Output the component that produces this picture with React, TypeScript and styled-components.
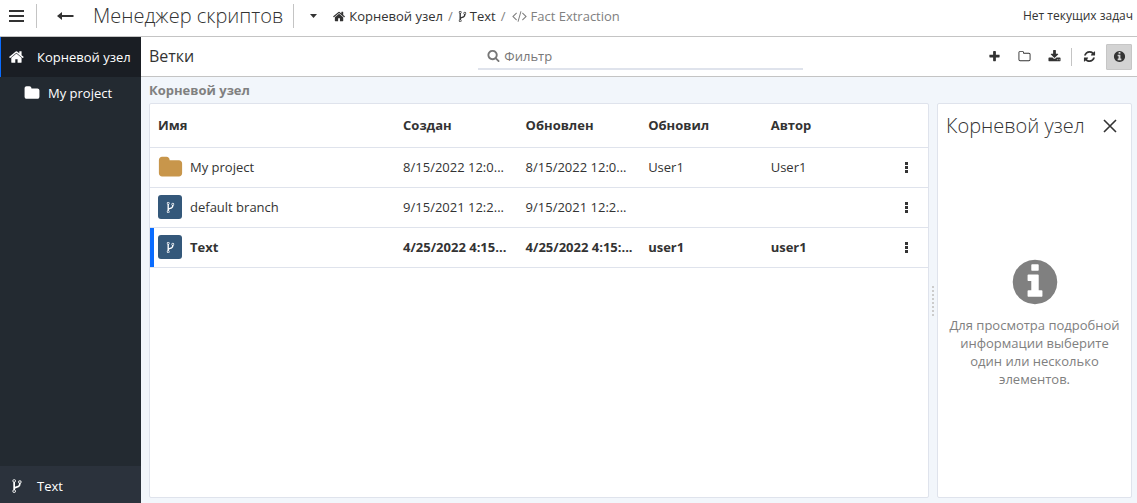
import React from 'react';
import styled, { createGlobalStyle, css } from 'styled-components';

const GlobalStyle = createGlobalStyle`
  *, *::before, *::after { box-sizing: border-box; }
  body {
    margin: 0;
    font-family: 'Open Sans', 'Noto Sans', sans-serif;
    font-size: 13px;
    line-height: 18px;
    color: #333;
    background: #f2f6fb;
  }
  button, input { font: inherit; color: inherit; }
  a { color: inherit; text-decoration: none; }
`;

const glyphs = {
  home: 'M1408 992v480q0 26-19 45t-45 19h-384v-384h-256v384h-384q-26 0-45-19t-19-45v-480q0-1 .5-3t.5-3l575-474 575 474q1 2 1 6zm223-69l-62 74q-8 9-21 11h-3q-13 0-21-7l-692-577-692 577q-12 8-24 7-13-2-21-11l-62-74q-8-10-7-23.5t11-21.5l719-599q32-26 76-26t76 26l244 204v-195q0-14 9-23t23-9h192q14 0 23 9t9 23v408l219 182q10 8 11 21.5t-7 23.5z',
  fork: 'M672 1472q0-40-28-68t-68-28-68 28-28 68 28 68 68 28 68-28 28-68zm0-1152q0-40-28-68t-68-28-68 28-28 68 28 68 68 28 68-28 28-68zm640 128q0-40-28-68t-68-28-68 28-28 68 28 68 68 28 68-28 28-68zm96 0q0 52-26 96.5t-70 69.5q-2 287-226 414-67 38-203 81-128 40-169.5 71t-41.5 100v26q44 25 70 69.5t26 96.5q0 80-56 136t-136 56-136-56-56-136q0-52 26-96.5t70-69.5v-820q-44-25-70-69.5t-26-96.5q0-80 56-136t136-56 136 56 56 136q0 52-26 96.5t-70 69.5v497q54-26 154-57 55-17 87.5-29.5t70.5-31 59-39.5 40.5-51 28-69.5 8.5-91.5q-44-25-70-69.5t-26-96.5q0-80 56-136t136-56 136 56 56 136z',
  info: 'M1152 1376v-160q0-14-9-23t-23-9h-96v-512q0-14-9-23t-23-9h-320q-14 0-23 9t-9 23v160q0 14 9 23t23 9h96v320h-96q-14 0-23 9t-9 23v160q0 14 9 23t23 9h448q14 0 23-9t9-23zm-128-896v-160q0-14-9-23t-23-9h-192q-14 0-23 9t-9 23v160q0 14 9 23t23 9h192q14 0 23-9t9-23zm640 416q0 209-103 385.5t-279.5 279.5-385.5 103-385.5-103-279.5-279.5-103-385.5 103-385.5 279.5-279.5 385.5-103 385.5 103 279.5 279.5 103 385.5z',
  search: 'M1216 832q0-185-131.5-316.5t-316.5-131.5-316.5 131.5-131.5 316.5 131.5 316.5 316.5 131.5 316.5-131.5 131.5-316.5zm512 832q0 52-38 90t-90 38q-54 0-90-38l-343-342q-179 124-399 124-143 0-273.5-55.5t-225-150-150-225-55.5-273.5 55.5-273.5 150-225 225-150 273.5-55.5 273.5 55.5 225 150 150 225 55.5 273.5q0 220-124 399l343 343q37 37 37 90z',
  code: 'M617 1399l-50 50q-10 10-23 10t-23-10l-466-466q-10-10-10-23t10-23l466-466q10-10 23-10t23 10l50 50q10 10 10 23t-10 23l-393 393 393 393q10 10 10 23t-10 23zm591-1067l-373 1291q-4 13-15.5 19.5t-23.5 2.5l-62-17q-13-4-19.5-15.5t-2.5-24.5l373-1291q4-13 15.5-19.5t23.5-2.5l62 17q13 4 19.5 15.5t2.5 24.5zm657 651l-466 466q-10 10-23 10t-23-10l-50-50q-10-10-10-23t10-23l393-393-393-393q-10-10-10-23t10-23l50-50q10-10 23-10t23 10l466 466q10 10 10 23t-10 23z',
  download: 'M1344 1344q0-26-19-45t-45-19-45 19-19 45 19 45 45 19 45-19 19-45zm256 0q0-26-19-45t-45-19-45 19-19 45 19 45 45 19 45-19 19-45zm128-224v320q0 40-28 68t-68 28h-1472q-40 0-68-28t-28-68v-320q0-40 28-68t68-28h465l135 136q58 56 136 56t136-56l136-136h464q40 0 68 28t28 68zm-325-569q17 41-14 70l-448 448q-18 19-45 19t-45-19l-448-448q-31-29-14-70 17-39 59-39h256v-448q0-26 19-45t45-19h256q26 0 45 19t19 45v448h256q42 0 59 39z',
  refresh: 'M1639 1056q0 5-1 7-64 268-268 434.5t-478 166.5q-146 0-282.5-55t-243.5-157l-129 129q-19 19-45 19t-45-19-19-45v-448q0-26 19-45t45-19h448q26 0 45 19t19 45-19 45l-137 137q71 66 161 102t187 36q134 0 250-65t186-179q11-17 53-117 8-23 30-23h192q13 0 22.5 9.5t9.5 22.5zm25-800v448q0 26-19 45t-45 19h-448q-26 0-45-19t-19-45 19-45l138-138q-148-137-349-137-134 0-250 65t-186 179q-11 17-53 117-8 23-30 23h-199q-13 0-22.5-9.5t-9.5-22.5v-7q65-268 270-434.5t480-166.5q146 0 284 55.5t245 156.5l130-129q19-19 45-19t45 19 19 45z',
  folder: 'M1728 608v704q0 92-66 158t-158 66h-1216q-92 0-158-66t-66-158v-960q0-92 66-158t158-66h320q92 0 158 66t66 158v32h672q92 0 158 66t66 158z',
  folderOpen: 'M1600 1312v-704q0-40-28-68t-68-28h-704q-40 0-68-28t-28-68v-64q0-40-28-68t-68-28h-320q-40 0-68 28t-28 68v960q0 40 28 68t68 28h1216q40 0 68-28t28-68zm128-704v704q0 92-66 158t-158 66h-1216q-92 0-158-66t-66-158v-960q0-92 66-158t158-66h320q92 0 158 66t66 158v32h672q92 0 158 66t66 158z',
  plus: 'M1600 736v192q0 40-28 68t-68 28h-416v416q0 40-28 68t-68 28h-192q-40 0-68-28t-28-68v-416h-416q-40 0-68-28t-28-68v-192q0-40 28-68t68-28h416v-416q0-40 28-68t68-28h192q40 0 68 28t28 68v416h416q40 0 68 28t28 68z',
};

const Svg = styled.svg`
  display: block;
  flex: none;
  fill: currentColor;
`;

function Icon({ name, size = 14 }: { name: keyof typeof glyphs; size?: number }) {
  const wide = name === 'code';
  return (
    <Svg
      width={wide ? size + 3 : size}
      height={size}
      viewBox={`0 0 ${wide ? 1920 : 1792} 1792`}
      aria-hidden="true"
    >
      <path d={glyphs[name]} />
    </Svg>
  );
}

const Page = styled.div`
  display: flex;
  flex-direction: column;
  min-height: 100vh;
`;

const Header = styled.header`
  display: flex;
  align-items: center;
  height: 37px;
  padding: 0 4px 4px 0;
  background: #fff;
  border-bottom: 1px solid #c4c4c4;
`;

const GhostButton = styled.button<{ $width: number }>`
  display: flex;
  align-items: center;
  justify-content: center;
  flex: none;
  width: ${(p) => p.$width}px;
  height: 26px;
  padding: 0;
  border: 0;
  background: transparent;
`;

const MenuButton = styled(GhostButton)`
  justify-content: flex-start;
  padding-left: 9px;
`;

const Divider = styled.span<{ $height: number }>`
  flex: none;
  width: 1px;
  height: ${(p) => p.$height}px;
  background: #c4c4c4;
`;

const Title = styled.h1`
  margin: 0 10px 0 0;
  font-size: 20px;
  line-height: 26px;
  font-weight: 300;
  white-space: nowrap;
`;

const Crumbs = styled.nav`
  display: flex;
  flex: 1;
  align-items: center;
  gap: 5px;
  white-space: nowrap;
`;

const Crumb = styled.a<{ $muted?: boolean }>`
  display: flex;
  align-items: center;
  gap: 3px;
  color: ${(p) => (p.$muted ? '#808080' : '#333')};
`;

const Slash = styled.span`
  color: #808080;
`;

const Tasks = styled.span`
  font-size: 12px;
  white-space: nowrap;
`;

const Body = styled.div`
  display: flex;
  flex: 1;
`;

const Sidebar = styled.nav`
  display: flex;
  flex-direction: column;
  flex: none;
  width: 141px;
  background: #232a31;
  color: #fff;
`;

const SideLink = styled.a<{ $kind: 'root' | 'child' | 'footer' }>`
  display: flex;
  align-items: center;
  gap: 12px;
  height: 40px;
  padding-left: 9px;
  white-space: nowrap;
  ${(p) =>
    p.$kind === 'root' &&
    css`
      padding-left: 8px;
      background: #1a1e24;
      border-left: 1px solid #0a6cff;
    `}
  ${(p) =>
    p.$kind === 'child' &&
    css`
      gap: 8px;
      height: 32px;
      padding-left: 24px;
    `}
  ${(p) =>
    p.$kind === 'footer' &&
    css`
      height: 37px;
      margin-top: auto;
      padding-top: 2px;
      background: #2b323c;
    `}
`;

const Content = styled.div`
  display: flex;
  flex: 1;
  flex-direction: column;
  min-width: 0;
`;

const Toolbar = styled.div`
  display: grid;
  grid-template-columns: 1fr 33% 1fr;
  align-items: center;
  height: 40px;
  padding: 0 5px 0 8px;
  background: #fff;
  border-bottom: 1px solid #c4c4c4;
`;

const ToolbarTitle = styled.h2`
  margin: 0;
  padding-bottom: 2px;
  font-size: 16px;
  line-height: 22px;
  font-weight: 400;
`;

const Filter = styled.label`
  display: flex;
  align-items: center;
  gap: 4px;
  height: 27px;
  padding-left: 9px;
  border-bottom: 2px solid #dfe3ec;
  color: #777;
`;

const FilterInput = styled.input`
  flex: 1;
  min-width: 0;
  height: 22px;
  padding: 0;
  border: 0;
  outline: 0;
  background: transparent;
  &::placeholder { color: #777; opacity: 1; }
`;

const Actions = styled.div`
  display: flex;
  align-items: center;
  justify-content: flex-end;
  gap: 4px;
`;

const ActionButton = styled.button<{ $active?: boolean }>`
  display: flex;
  align-items: center;
  justify-content: center;
  width: 26px;
  height: 26px;
  padding: 0;
  border: ${(p) => (p.$active ? '1px solid #c6c6c6' : '0')};
  border-radius: 1px;
  background: ${(p) => (p.$active ? '#d3d3d3' : 'transparent')};
`;

const Workspace = styled.main`
  display: flex;
  flex: 1;
  flex-direction: column;
  padding: 4px 5px 5px 8px;
`;

const Path = styled.div`
  height: 22px;
  font-weight: 700;
  color: #808080;
`;

const Columns = styled.div`
  display: flex;
  flex: 1;
`;

const Panel = styled.section`
  background: #fff;
  border: 1px solid #dfe3ec;
  border-radius: 2px;
`;

const ListPanel = styled(Panel)`
  flex: 1;
  min-width: 0;
`;

const Splitter = styled.div`
  display: flex;
  flex: none;
  flex-direction: column;
  align-items: center;
  justify-content: center;
  gap: 2px;
  width: 8px;
`;

const Dot = styled.span`
  width: 2px;
  height: 2px;
  background: #ccc;
`;

const InfoPanel = styled(Panel)`
  display: flex;
  flex: none;
  flex-direction: column;
  width: 195px;
`;

const InfoHeader = styled.div`
  display: flex;
  align-items: center;
  justify-content: space-between;
  height: 44px;
  padding: 0 8px;
`;

const InfoTitle = styled.h2`
  margin: 0;
  font-size: 20px;
  line-height: 26px;
  font-weight: 300;
  white-space: nowrap;
`;

const Empty = styled.div`
  display: flex;
  flex: 1;
  flex-direction: column;
  align-items: center;
  justify-content: center;
  gap: 8px;
  padding: 0 8px 2px;
  color: #808080;
  text-align: center;
`;

const Hint = styled.p`
  margin: 0;
`;

const Table = styled.table`
  width: 100%;
  table-layout: fixed;
  border-collapse: separate;
  border-spacing: 0;
`;

const Col = styled.col<{ $width?: string }>`
  width: ${(p) => p.$width ?? 'auto'};
`;

const Th = styled.th`
  height: 44px;
  padding: 0 8px 2px;
  border-bottom: 1px solid #dfe3ec;
  font-weight: 700;
  text-align: left;
`;

const Row = styled.tr<{ $current?: boolean }>`
  font-weight: ${(p) => (p.$current ? 700 : 400)};
  td:first-child {
    box-shadow: ${(p) => (p.$current ? 'inset 4px 0 #0a6cff' : 'none')};
  }
`;

const Td = styled.td`
  height: 40px;
  padding: 0 8px 1px;
  border-bottom: 1px solid #dfe3ec;
  white-space: nowrap;
`;

const NameCell = styled.div`
  display: flex;
  align-items: center;
  gap: 8px;
`;

const Badge = styled.span<{ $folder: boolean }>`
  display: flex;
  align-items: center;
  justify-content: center;
  flex: none;
  width: 24px;
  height: 24px;
  border-radius: 3px;
  color: ${(p) => (p.$folder ? '#c8964b' : '#fff')};
  background: ${(p) => (p.$folder ? 'transparent' : '#34587a')};
`;

const rows = [
  { name: 'My project', folder: true, created: '8/15/2022 12:0...', updated: '8/15/2022 12:0...', by: 'User1', author: 'User1' },
  { name: 'default branch', folder: false, created: '9/15/2021 12:2...', updated: '9/15/2021 12:2...', by: '', author: '' },
  { name: 'Text', folder: false, current: true, created: '4/25/2022 4:15...', updated: '4/25/2022 4:15:...', by: 'user1', author: 'user1' },
];

export default function App() {
  return (
    <Page>
      <GlobalStyle />
      <Header>
        <MenuButton $width={36} type="button" aria-label="Меню">
          <Svg width="15" height="12" viewBox="0 0 15 12">
            <path d="M0 0h15v2H0zM0 5h15v2H0zM0 10h15v2H0z" />
          </Svg>
        </MenuButton>
        <Divider $height={24} />
        <GhostButton $width={56} type="button" aria-label="Назад">
          <Svg width="17" height="10" viewBox="0 0 17 10">
            <path d="M0 5l5-4v3h11.500v2H5v3z" />
          </Svg>
        </GhostButton>
        <Title>Менеджер скриптов</Title>
        <Divider $height={24} />
        <GhostButton $width={39} type="button" aria-label="История">
          <Svg width="7" height="4" viewBox="0 0 7 4">
            <path d="M0 0h7L3.500 4z" />
          </Svg>
        </GhostButton>
        <Crumbs>
          <Crumb href="#root">
            <Icon name="home" size={13} />
            Корневой узел
          </Crumb>
          <Slash>/</Slash>
          <Crumb href="#text">
            <Svg width="9" height="13" viewBox="320 0 1152 1792" aria-hidden="true">
              <path d={glyphs.fork} />
            </Svg>
            Text
          </Crumb>
          <Slash>/</Slash>
          <Crumb href="#fact" $muted>
            <Icon name="code" />
            Fact Extraction
          </Crumb>
        </Crumbs>
        <Tasks>Нет текущих задач</Tasks>
      </Header>
      <Body>
        <Sidebar>
          <SideLink href="#root" $kind="root">
            <Icon name="home" size={16} />
            Корневой узел
          </SideLink>
          <SideLink href="#project" $kind="child">
            <Icon name="folder" size={16} />
            My project
          </SideLink>
          <SideLink href="#text" $kind="footer">
            <Icon name="fork" size={16} />
            Text
          </SideLink>
        </Sidebar>
        <Content>
          <Toolbar>
            <ToolbarTitle>Ветки</ToolbarTitle>
            <Filter>
              <Icon name="search" size={13} />
              <FilterInput type="text" placeholder="Фильтр" aria-label="Фильтр" />
            </Filter>
            <Actions>
              <ActionButton type="button" aria-label="Создать">
                <Icon name="plus" size={13} />
              </ActionButton>
              <ActionButton type="button" aria-label="Создать папку">
                <Icon name="folderOpen" size={13} />
              </ActionButton>
              <ActionButton type="button" aria-label="Импорт">
                <Icon name="download" size={13} />
              </ActionButton>
              <Divider $height={18} />
              <ActionButton type="button" aria-label="Обновить">
                <Icon name="refresh" size={13} />
              </ActionButton>
              <ActionButton type="button" aria-label="Информация" $active>
                <Icon name="info" size={13} />
              </ActionButton>
            </Actions>
          </Toolbar>
          <Workspace>
            <Path>Корневой узел</Path>
            <Columns>
              <ListPanel>
                <Table>
                  <colgroup>
                    <Col $width="31.5%" />
                    <Col $width="15.75%" />
                    <Col $width="15.75%" />
                    <Col $width="15.75%" />
                    <Col $width="15.75%" />
                    <Col />
                  </colgroup>
                  <thead>
                    <tr>
                      <Th>Имя</Th>
                      <Th>Создан</Th>
                      <Th>Обновлен</Th>
                      <Th>Обновил</Th>
                      <Th>Автор</Th>
                      <Th />
                    </tr>
                  </thead>
                  <tbody>
                    {rows.map((row) => (
                      <Row key={row.name} $current={row.current}>
                        <Td>
                          <NameCell>
                            <Badge $folder={row.folder}>
                              <Icon name={row.folder ? 'folder' : 'fork'} size={row.folder ? 25 : 13} />
                            </Badge>
                            {row.name}
                          </NameCell>
                        </Td>
                        <Td>{row.created}</Td>
                        <Td>{row.updated}</Td>
                        <Td>{row.by}</Td>
                        <Td>{row.author}</Td>
                        <Td>
                          <GhostButton $width={26} type="button" aria-label={`Действия: ${row.name}`}>
                            <Svg width="3" height="11" viewBox="0 0 3 11">
                              <path d="M0 0h3v3H0zM0 4h3v3H0zM0 8h3v3H0z" />
                            </Svg>
                          </GhostButton>
                        </Td>
                      </Row>
                    ))}
                  </tbody>
                </Table>
              </ListPanel>
              <Splitter>
                {Array.from({ length: 8 }, (_, i) => (
                  <Dot key={i} />
                ))}
              </Splitter>
              <InfoPanel>
                <InfoHeader>
                  <InfoTitle>Корневой узел</InfoTitle>
                  <GhostButton $width={26} type="button" aria-label="Закрыть">
                    <Svg width="14" height="14" viewBox="0 0 14 14">
                      <path d="M1 1l12 12M13 1L1 13" stroke="currentColor" strokeWidth="1.600" />
                    </Svg>
                  </GhostButton>
                </InfoHeader>
                <Empty>
                  <Icon name="info" size={52} />
                  <Hint>Для просмотра подробной информации выберите один или несколько элементов.</Hint>
                </Empty>
              </InfoPanel>
            </Columns>
          </Workspace>
        </Content>
      </Body>
    </Page>
  );
}
